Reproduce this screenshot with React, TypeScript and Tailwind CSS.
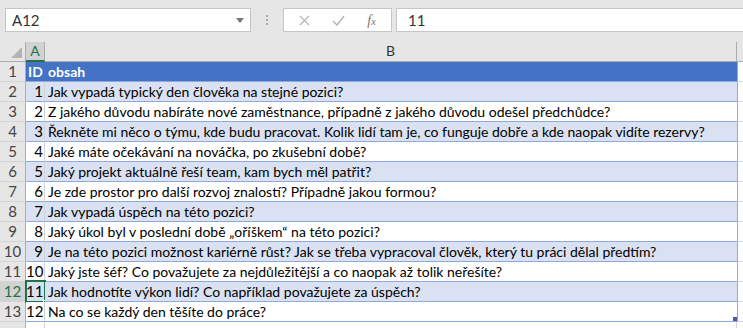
import { memo } from "react";

const rows: string[] = [
  "Jak vypadá typický den člověka na stejné pozici?",
  "Z jakého důvodu nabíráte nové zaměstnance, případně z jakého důvodu odešel předchůdce?",
  "Řekněte mi něco o týmu, kde budu pracovat. Kolik lidí tam je, co funguje dobře a kde naopak vidíte rezervy?",
  "Jaké máte očekávání na nováčka, po zkušební době?",
  "Jaký projekt aktuálně řeší team, kam bych měl patřit?",
  "Je zde prostor pro další rozvoj znalostí? Případně jakou formou?",
  "Jak vypadá úspěch na této pozici?",
  "Jaký úkol byl v poslední době „oříškem“ na této pozici?",
  "Je na této pozici možnost kariérně růst? Jak se třeba vypracoval člověk, který tu práci dělal předtím?",
  "Jaký jste šéf? Co považujete za nejdůležitější a co naopak až tolik neřešíte?",
  "Jak hodnotíte výkon lidí? Co například považujete za úspěch?",
  "Na co se každý den těšíte do práce?",
];

const font = { fontFamily: "Lato, 'Liberation Sans', sans-serif" };

function App() {
  return (
    <div
      className="w-[743px] h-[328px] overflow-hidden bg-[#e6e6e6] flex flex-col text-[14px] text-black"
      style={font}
    >
      {/* formula bar */}
      <div className="h-[42px] flex items-start pt-[8px] pl-[5px] shrink-0 text-[15px]">
        <div className="w-[246px] h-[24px] bg-white border border-[#c6c6c6] flex items-center pl-[6px] pr-[6px] text-[#333]">
          <span className="flex-1">A12</span>
          <svg width="8" height="5" viewBox="0 0 8 5">
            <path d="M0 0h8L4 5z" fill="#777" />
          </svg>
        </div>
        <div className="w-[32px] h-[24px] flex flex-col items-center justify-center gap-[2px]">
          <span className="w-[2px] h-[2px] bg-[#aaa]" />
          <span className="w-[2px] h-[2px] bg-[#aaa]" />
          <span className="w-[2px] h-[2px] bg-[#aaa]" />
        </div>
        <div className="w-[109px] h-[24px] bg-white border border-[#c6c6c6] flex items-center justify-around px-[4px]">
          <svg width="11" height="11" viewBox="0 0 11 11">
            <path d="M1 1l9 9M10 1l-9 9" stroke="#b5b5b5" strokeWidth="1.3" />
          </svg>
          <svg width="13" height="11" viewBox="0 0 13 11">
            <path d="M1 6l4 4 7-9" stroke="#b5b5b5" strokeWidth="1.5" fill="none" />
          </svg>
          <span
            className="text-[#777] text-[14px] italic"
            style={{ fontFamily: "'Liberation Serif', serif" }}
          >
            f<span className="text-[11px]">x</span>
          </span>
        </div>
        <div className="w-[4px]" />
        <div className="flex-1 h-[24px] bg-white border border-[#c6c6c6] border-r-0 flex items-center pl-[11px] text-[#333]">
          11
        </div>
      </div>

      {/* sheet */}
      <div className="flex-1 bg-white grid grid-cols-[26px_19px_692px_1fr] grid-rows-[20px] auto-rows-[20px] leading-[19px]">
        {/* column headers */}
        <div className="bg-[#e6e6e6] border-b border-r border-[#ababab] relative">
          <svg className="absolute right-[3px] bottom-[3px]" width="11" height="11" viewBox="0 0 11 11">
            <path d="M11 0v11H0z" fill="#b4b4b4" />
          </svg>
        </div>
        <div className="bg-[#d2d2d2] border-b-2 border-b-[#217346] border-r border-r-[#ababab] text-center text-[#217346] leading-[18px]">
          A
        </div>
        <div className="bg-[#e6e6e6] border-b border-r border-[#ababab] text-center text-[#333] leading-[18px]">
          B
        </div>
        <div className="bg-[#e6e6e6] border-b border-[#ababab]" />

        {/* header row */}
        <div className="bg-[#e6e6e6] border-r border-[#ababab] border-b border-b-[#d4d4d4] text-center text-[#444] text-[15px]">
          1
        </div>
        <div className="bg-[#4472c4] text-white font-bold pl-[2px] border-b border-[#8ea9db]">ID</div>
        <div className="bg-[#4472c4] text-white font-bold pl-[3px] border-b border-[#8ea9db]">obsah</div>
        <div className="border-b border-[#d4d4d4] border-l border-l-[#8ea9db]" />

        {rows.map((text, i) => {
          const band = i % 2 === 0 ? "bg-[#d9e1f2]" : "bg-white";
          const selected = i === 10;
          return [
            <div
              key={`h${i}`}
              className={`${selected ? "bg-[#d2d2d2] text-[#217346]" : "bg-[#e6e6e6] text-[#444]"} border-r border-[#ababab] border-b border-b-[#d4d4d4] text-center text-[15px]`}
            >
              {i + 2}
            </div>,
            <div
              key={`a${i}`}
              className={`${band} border-b border-[#8ea9db] border-r border-r-[#d4d4d4] text-right pr-[1px] relative text-[15px]`}
            >
              {i + 1}
              {selected && (
                <div className="absolute left-[-1px] top-[-2px] right-[-2px] bottom-[-2px] border-2 border-[#217346]">
                  <div className="absolute right-[-4px] bottom-[-4px] w-[5px] h-[5px] bg-[#217346] border border-white" />
                </div>
              )}
            </div>,
            <div
              key={`b${i}`}
              className={`${band} border-b border-[#8ea9db] pl-[3px] whitespace-nowrap overflow-hidden relative`}
            >
              {text}
              {i === rows.length - 1 && (
                <div className="absolute right-0 bottom-0 w-[4px] h-[4px] bg-[#4a5ba6]" />
              )}
            </div>,
            <div key={`c${i}`} className="border-b border-[#d4d4d4] border-l border-l-[#8ea9db]" />,
          ];
        })}

        {/* partial row 14 */}
        <div className="bg-[#e6e6e6] border-r border-[#ababab]" />
        <div className="border-r border-[#d4d4d4]" />
        <div className="border-r border-[#d4d4d4]" />
        <div />
      </div>
    </div>
  );
}

export default memo(App);
